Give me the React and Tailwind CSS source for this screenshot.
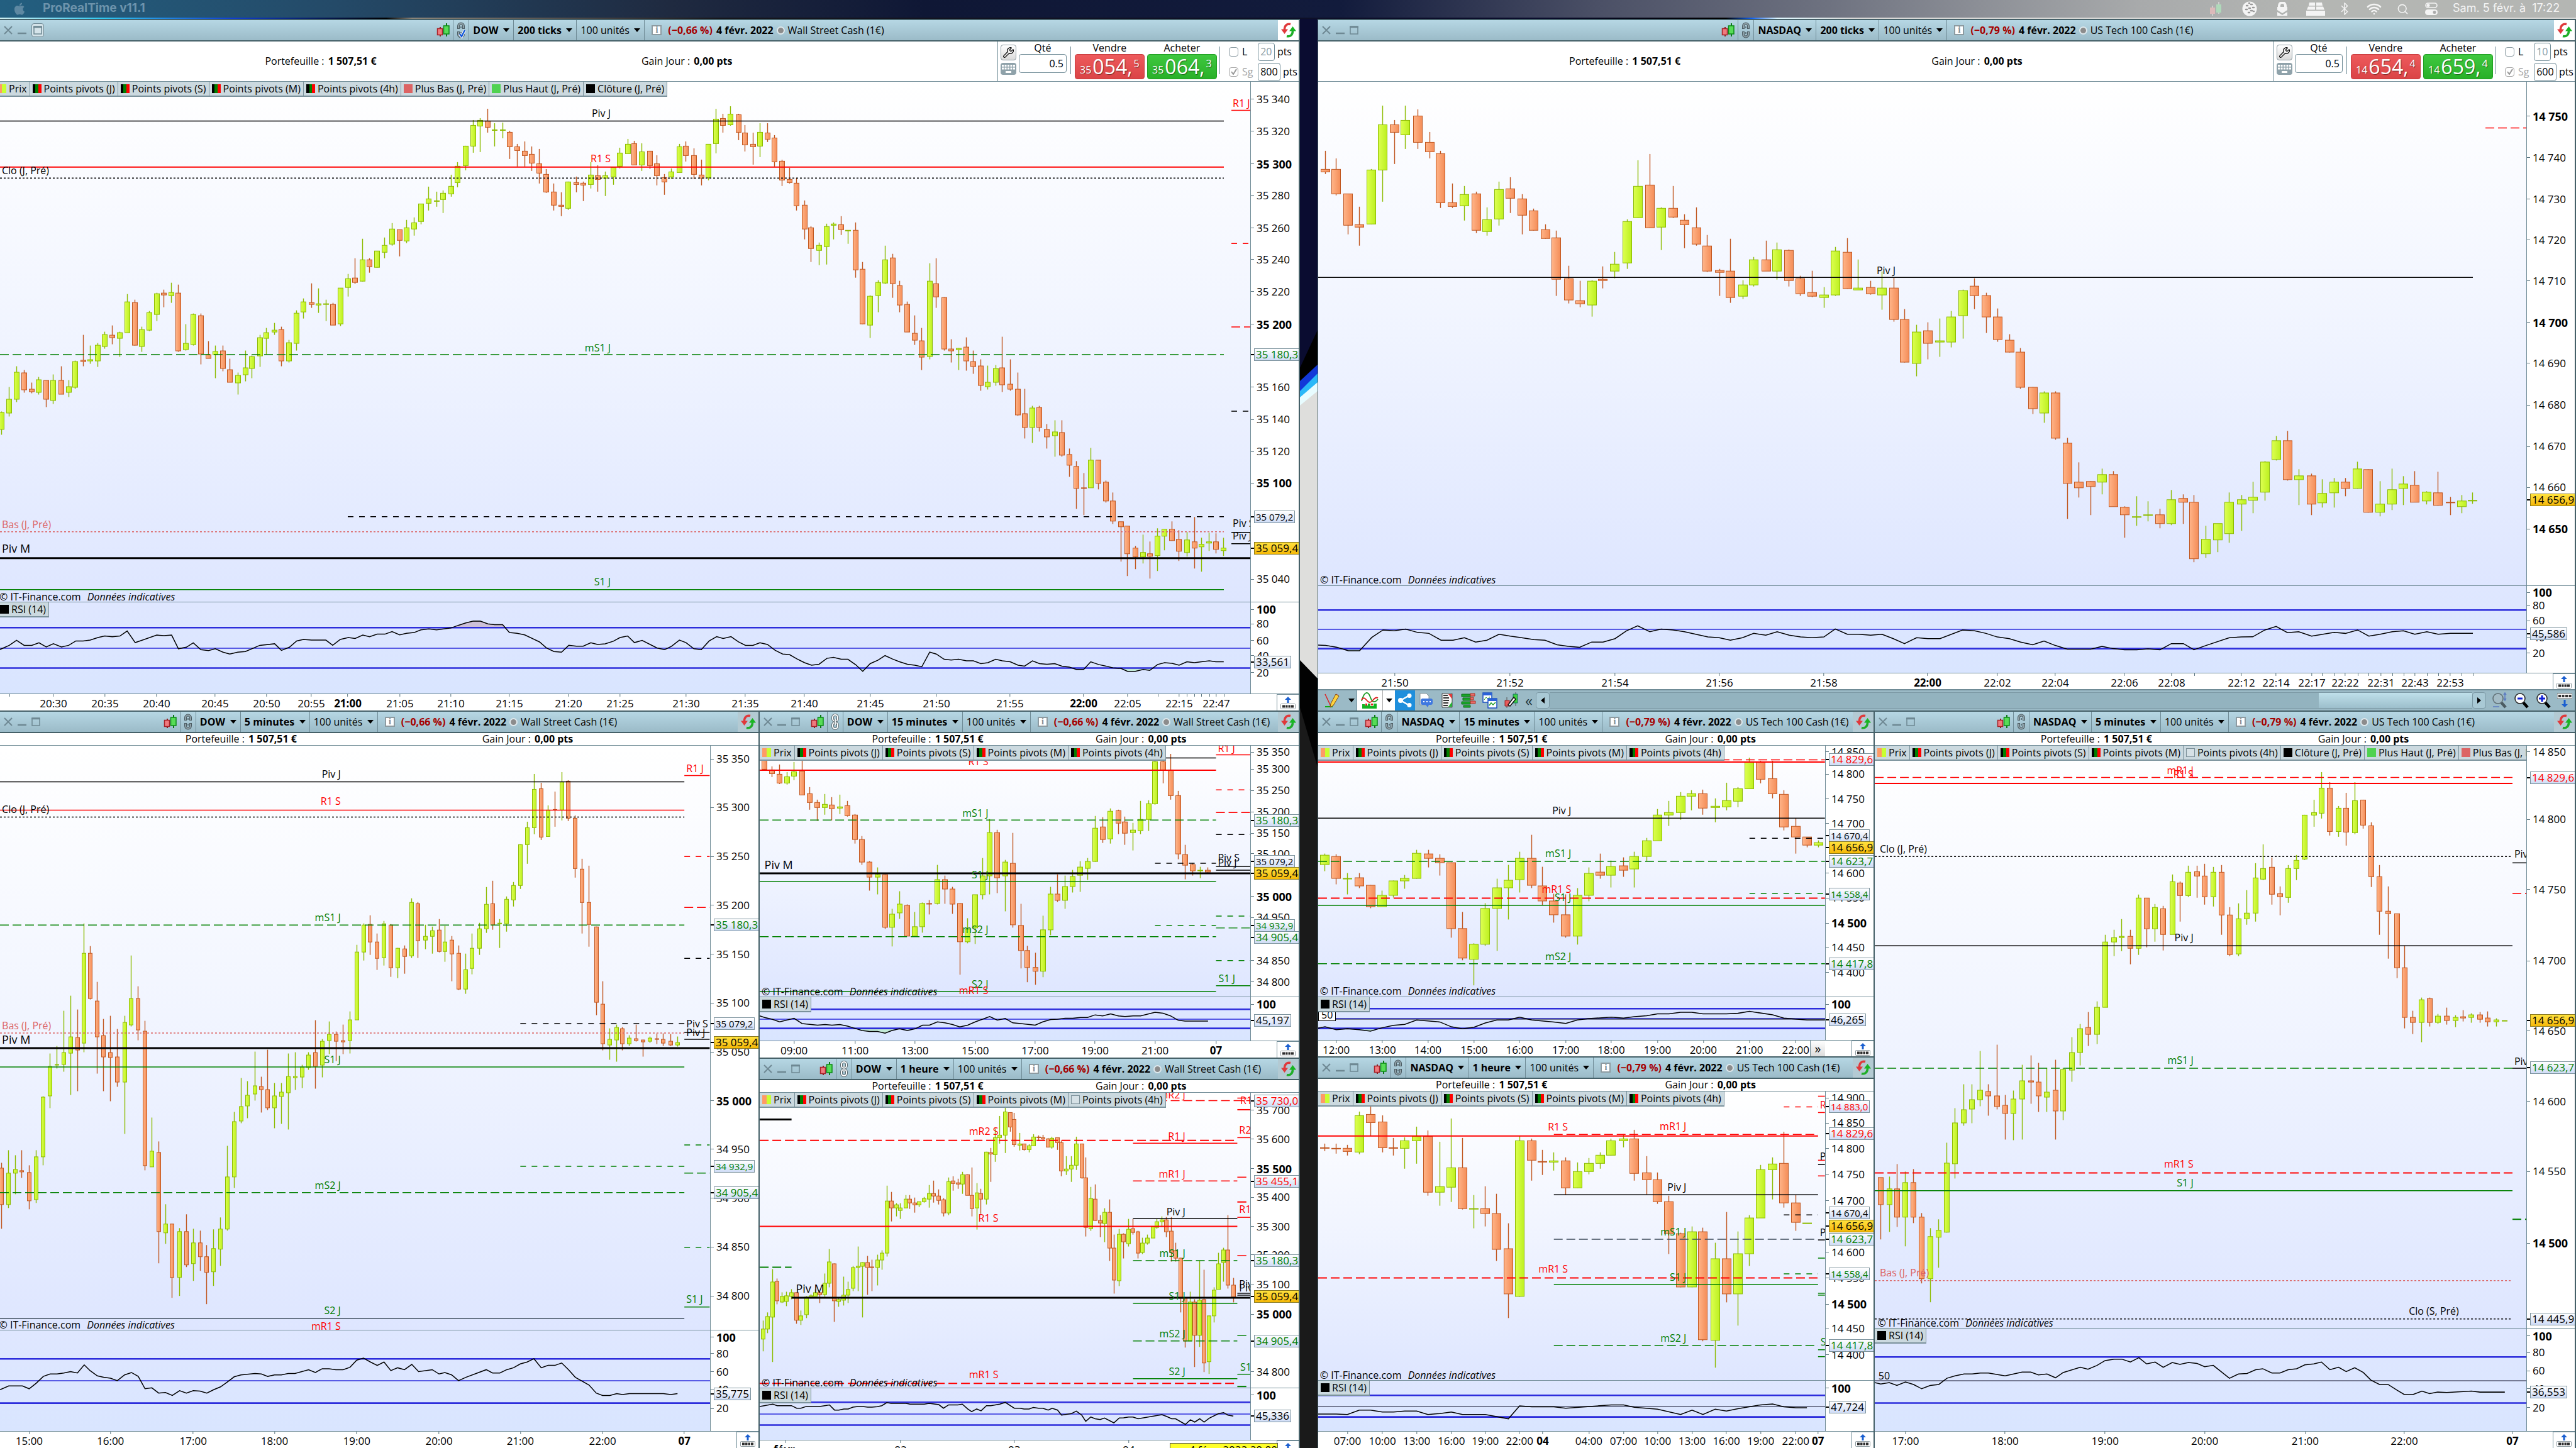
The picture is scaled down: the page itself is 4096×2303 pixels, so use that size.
import React from "react";
import { FaApple } from "react-icons/fa";
import { Bluetooth, Wifi, Search, Wrench } from "lucide-react";

/* ---------- data helpers ---------- */

// Scale of a block of samples: x' = ox + x * sx, y' = oy + y * sy (desktop units).
const scale = (ox, sx, oy, sy) => ({ x: (v) => ox + v * sx, y: (v) => oy + v * sy });
const PX = scale(0, 1, 0, 1);
const A1 = scale(0, 0.6739, 0, 0.36958);
const A2 = scale(1022.6, 0.69567, 0, 0.36958);
const A3 = scale(0, 0.6739, 579.5, 0.36088);
const A4 = scale(1022.6, 0.69567, 579.5, 0.36088);
const B1 = scale(2086.2, 0.6522, 0, 0.36958);
const B2 = scale(3067.9, 0.65567, 0, 0.36958);
const B3 = scale(2086.2, 1.28178, 579.5, 0.36088);
const D5 = scale(0, 0.77394, 1118.1, 0.75568);
const D15 = scale(1186.3, 0.57393, 1118.1, 0.37827);
const D60 = scale(1186.3, 0.57393, 1670.3, 0.40349);
const NQ = scale(2086.2, 0.57393, 1118.1, 0.75568);
const N5 = scale(2972.5, 0.71655, 1118.1, 0.75568);

// "g x high top bottom low, ..." -> candle objects
const candles = (s, text) =>
  text.trim().split(/\s*[,\n]\s*/).map((row) => {
    const p = row.trim().split(/\s+/);
    return { up: p[0] === "g", x: s.x(+p[1]), hi: s.y(+p[2]), top: s.y(+p[3]), bot: s.y(+p[4]), lo: s.y(+p[5]) };
  });

// "x,y x,y ..." -> point pairs
const points = (s, text) =>
  text.trim().split(/\s+/).map((p) => {
    const [x, y] = p.split(",");
    return [s.x(+x), s.y(+y)];
  });

const STROKE = { k: "#000000", r: "#ff0000", g: "#008000", b: "#dc6464", s: "#3c4a5a" };
const INK = { k: "text-black", r: "text-[#ff0000]", g: "text-[#007d00]", b: "text-[#dc6464]" };
const DASH = { L: "14 6", W: "14 6", S: "9 9", O: "3 3" };

// Daily levels are thin, weekly ones medium and monthly ones heavy.
const lineWidth = (w, ink, dash) => {
  if (w === 3) return ink === "k" ? 3 : 2;
  return dash === "W" ? 2 : 1.5;
};

/* ---------- chart data ---------- */

const dowTicks = {
  view: { x: 0, w: 1988, py: 130, ph: 828, rh: 145, th: 27 },
  s: PX,
  body: 8,
  candles: [
    ...candles(A3, `g 4 208 212 288 312,g 22 102 155 216 231,g 39 11 35 156 167,r 57 26 39 114 126,r 75 83 110 122 130,g 91 57 69 126 134,r 109 73 73 156 191,g 126 45 73 160 176,r 144 11 73 133 133,g 162 72 99 126 145,g 178 -15 -11 103 110`),
    ...candles(A1, `r 196 1443 1553 1558 1577,g 213 1487 1550 1554 1566,g 231 1476 1488 1554 1580,g 247 1428 1440 1491 1503,r 265 1402 1443 1455 1484,g 283 1428 1432 1458 1537,g 300 1265 1300 1432 1432,r 318 1291 1303 1488 1488,g 334 1406 1418 1492 1515,g 352 1339 1347 1421 1425,g 370 1262 1266 1355 1382,r 387 1247 1263 1270 1323,g 405 1218 1259 1274 1303,r 421 1225 1263 1510 1515,g 439 1395 1480 1506 1511,g 456 1351 1355 1484 1488,r 474 1350 1359 1525 1569,r 492 1468 1527 1543 1543,g 508 1487 1514 1528 1629,r 526 1487 1510 1587 1600,r 542 1546 1591 1646 1646,g 561 1605 1617 1650 1698,g 579 1509 1584 1613 1643,g 595 1531 1536 1588 1629,g 613 1443 1455 1532 1580,g 629 1413 1432 1458 1526,g 648 1391 1421 1429 1443,r 664 1406 1418 1554 1578,g 682 1465 1477 1554 1562,g 700 1336 1348 1480 1510,g 716 1284 1300 1344 1373,r 735 1221 1303 1311 1326,g 751 1243 1307 1314 1348,g 769 1291 1307 1311 1382,r 785 1303 1311 1399 1399,g 803 1241 1241 1395 1404,g 822 1181 1200 1237 1278,r 838 1111 1196 1215 1223,g 856 1029 1119 1211 1211,r 872 1111 1119 1148 1175,g 890 1082 1082 1152 1152,g 908 1022 1056 1086 1112,g 925 960 986 1052 1057,r 943 990 990 1034 1105,g 959 948 982 1038 1046,g 977 937 960 986 1016,g 993 879 879 953 965,g 1012 804 857 875 906,g 1030 826 864 866 889,g 1046 820 831 860 917,g 1064 752 801 835 847,g 1080 697 717 787 806,g 1099 628 628 713 732,g 1117 517 539 628 658,g 1133 509 518 543 655,r 1151 469 521 547 570,g 1167 531 558 560 631,g 1186 528 558 562 596,r 1202 564 569 632 684,r 1220 620 632 647 718,r 1238 609 650 669 717,r 1254 631 665 702 736,r 1273 642 706 746 791,r 1289 728 750 827 832,r 1307 791 827 883 906,r 1325 829 883 890 932,g 1341 783 783 897 905,r 1360 760 787 794 828,r 1376 783 790 798 865,g 1394 697 754 794 813,r 1410 712 757 772 825,g 1428 738 757 767 843,g 1447 722 722 761 795,g 1463 635 658 717 725,g 1481 598 621 661 661,r 1497 605 617 709 709,g 1515 616 654 709 735,r 1534 650 650 713 728,r 1550 669 706 757 799`),
    ...candles(A2, `r 49 750 765 783 839,g 65 724 739 761 772,g 83 620 632 742 742,r 98 609 628 669 695,r 116 638 669 750 772,r 133 686 753 768 799,g 149 621 621 765 776,g 167 469 514 617 659,r 182 491 510 540 570,g 200 457 492 536 540,r 218 491 495 569 603,r 233 539 573 625 651,r 251 572 621 632 710,g 267 531 569 628 677,r 284 531 573 599 611,r 300 583 595 698 718,r 318 686 694 776 802,r 335 722 772 787 791,r 351 765 790 886 906,r 369 863 883 986 1031,r 384 974 982 1071 1127,g 402 1045 1056 1078 1142,g 420 963 975 1063 1138,g 435 959 964 971 1031,r 453 930 967 990 1012,g 468 992 993 995 1050,r 486 959 993 1163 1197,r 502 1129 1159 1396 1396,g 519 1273 1277 1399 1455,g 537 1206 1215 1274 1345,g 553 1059 1119 1219 1223,r 570 1092 1111 1222 1282,r 586 1210 1230 1314 1345,r 604 1299 1311 1429 1429,r 621 1358 1436 1466 1485,r 637 1413 1469 1539 1595,g 655 1133 1211 1536 1547,r 670 1111 1222 1278 1326,r 688 1281 1281 1502 1510,r 704 1461 1502 1510 1561,g 721 1499 1499 1506 1593,r 739 1454 1495 1554 1596,r 755 1509 1558 1580 1609`),
    ...candles(A4, `r 772 -20 8 95 118,g 788 8 80 100 111,g 806 4 20 80 96,r 821 -120 16 92 122,r 839 -20 88 110 119,r 857 38 110 224 229,r 872 110 220 280 327,g 890 185 194 280 349,r 906 185 190 280 297,r 923 264 288 322 372,g 941 249 299 315 410,r 957 249 303 402 409,r 974 374 398 446 497,r 990 427 451 549 640,r 1007 480 545 549 667,g 1023 370 424 545 545,r 1041 424 424 526 554,r 1058 514 522 605 610,r 1074 567 605 692 705,r 1092 696 696 719 871,r 1107 715 715 836 935,r 1125 801 812 850 905,g 1143 752 832 850 881,r 1158 782 836 847 946,g 1176 725 760 844 912,g 1192 730 730 760 822,r 1209 695 730 779 779,r 1225 733 772 825 870,g 1243 740 776 832 850,r 1260 676 783 813 901,g 1276 767 794 806 916,g 1294 744 783 791 825,r 1309 748 783 817 836,g 1327 767 813 822 847`),
  ],
  lines: [
    [192, 0, 1946, "k", 2], [266, 0, 1946, "r", 3], [283, 0, 1946, "k", 1, "O"], [564, 0, 1946, "g", 1, "L"],
    [822, 553, 1946, "k", 1, "S"], [846, 0, 1946, "b", 1, "O"], [888, 0, 1988, "k", 3], [938, 0, 1946, "g", 2],
    [175, 1958, 1988, "r", 2], [387, 1958, 1988, "r", 1, "S"], [520, 1958, 1988, "r", 1, "L"], [654, 1958, 1988, "k", 1, "S"],
    [847, 1958, 1988, "k", 2], [865, 1958, 1988, "k", 2],
  ],
  labels: [
    ["Piv J", 971, 180, "k", "r"], ["R1 S", 971, 252, "r", "r"], ["Clo (J, Pré)", 3, 271, "k"], ["mS1 J", 971, 553, "g", "r"],
    ["Bas (J, Pré)", 3, 835, "b"], ["Piv M", 3, 873, "k", "l", 1], ["S1 J", 971, 926, "g", "r"],
    ["R1 J", 1960, 164, "r"], ["Piv S", 1960, 833, "k"], ["Piv J", 1960, 853, "k"],
  ],
  copyright: [-1, 950],
  axis: [["35 340", 158], ["35 320", 209], ["35 300", 261, 1], ["35 280", 311], ["35 260", 363], ["35 240", 413], ["35 220", 464], ["35 200", 516, 1], ["35 160", 616], ["35 140", 668], ["35 120", 719], ["35 100", 769, 1], ["35 040", 922]],
  boxes: [["35 180,3", 564, "g"], ["35 079,2", 823, "k", 1], ["35 059,4", 873, "y"]],
  rsi: [
    ...points(A3, `0,1258 22,1240 39,1218 57,1240 75,1240 92,1229 109,1247 126,1233 145,1247 162,1240 179,1221 196,1221 213,1217 231,1206 247,1199 265,1202 283,1199 300,1177 319,1228 370,1195 387,1198 405,1195 421,1255 440,1248 456,1229 474,1259 492,1263 508,1255 526,1270 542,1278 561,1270 579,1267 613,1240 648,1233 664,1262 683,1248 700,1221 716,1214 735,1217 769,1217 785,1240 803,1214 822,1206 838,1210 856,1195 872,1202 890,1191 908,1191 925,1180 943,1194 959,1187 977,1184 993,1172 1012,1168 1030,1172 1064,1164 1082,1152 1099,1142 1117,1134 1133,1134 1151,1146 1167,1149 1186,1149 1202,1184 1220,1187 1238,1194 1273,1225 1289,1251 1307,1267 1325,1270 1342,1240 1360,1244 1376,1244 1394,1229 1410,1236 1428,1233 1447,1222 1463,1206 1481,1199 1497,1228 1515,1218 1550,1251`),
    ...points(A4, `49,1259 65,1244 83,1217 98,1228 116,1255 133,1259 151,1221 168,1202 183,1210 201,1202 218,1225 234,1240 251,1240 267,1229 284,1236 302,1262 319,1278 335,1281 352,1300 369,1316 385,1327 402,1323 420,1297 435,1293 453,1301 468,1301 486,1325 502,1354 519,1320 537,1305 553,1285 570,1300 586,1312 604,1323 621,1327 637,1334 655,1270 670,1278 688,1301 704,1304 721,1301 739,1308 755,1308 772,1320 788,1316 806,1301 821,1308 839,1312 857,1327 872,1331 890,1308 906,1320 923,1323 941,1320 957,1331 974,1335 990,1346 1007,1346 1023,1312 1041,1324 1058,1331 1074,1339 1092,1341 1107,1354 1125,1354 1143,1346 1158,1350 1176,1324 1192,1316 1209,1319 1225,1327 1243,1312 1260,1316 1276,1312 1294,1308 1309,1312 1327,1312`),
  ],
  bands: [999, 1031, 1063],
  rsiAxis: [["100", 970, 1], ["80", 993], ["60", 1019], ["40", 1043], ["20", 1070]],
  rsiBox: ["33,561", 1053],
  times: [["20:30", 85], ["20:35", 167], ["20:40", 249], ["20:45", 342], ["20:50", 424], ["20:55", 495], ["21:00", 553, 1], ["21:05", 636], ["21:10", 717], ["21:15", 810], ["21:20", 904], ["21:25", 986], ["21:30", 1091], ["21:35", 1185], ["21:40", 1279], ["21:45", 1384], ["21:50", 1489], ["21:55", 1606], ["22:00", 1723, 1], ["22:05", 1793], ["22:15", 1875], ["22:47", 1934]],
  extraTicks: [15, 1841, 1887, 1899, 1910, 1923, 1946],
};

const nasTicks = {
  view: { x: 2096, w: 1921, py: 130, ph: 802, rh: 138, th: 26 },
  s: PX,
  body: 14,
  candles: [
    ...candles(B1, `r 32 649 728 739 750,r 59 683 728 835 842,r 88 835 835 971 1008,r 115 889 967 979 1057,g 145 727 732 964 967,g 172 454 536 732 869,r 201 517 536 569 707,g 228 454 518 580 640,r 258 472 499 613 640,r 287 568 613 654 681,r 314 649 661 872 895,r 343 790 872 890 895,g 371 801 838 886 949,r 400 826 835 993 1004,g 427 893 945 997 1016,g 456 782 816 942 972,r 483 764 813 853 917,r 512 837 857 927 1008,r 540 897 908 993 993,r 569 967 990 1027 1027,r 596 992 1023 1204 1275,r 626 1144 1200 1292 1308,r 653 1210 1296 1307 1323,g 682 1206 1211 1314 1363,r 709 1147 1204 1207 1241,g 738 1085 1137 1167 1200,g 768 944 953 1133 1157,g 795 690 802 938 938,r 824 664 798 982 982,g 851 893 898 979 1076,r 881 801 898 934 938,r 908 922 949 967 1068,r 937 893 982 1052 1057,r 964 1011 1060 1167 1171,r 994 1158 1166 1174 1274,r 1020 1029 1167 1281 1304,g 1050 1206 1226 1277 1288,g 1077 1107 1119 1226 1234,r 1107 1037 1119 1167 1167,g 1134 1044 1075 1167 1205,r 1163 1074 1078 1207 1234,r 1190 1188 1200 1266 1275,r 1219 1165 1259 1277 1281,g 1249 1236 1270 1281 1326,g 1276 1063 1082 1270 1275,r 1305 1026 1086 1244 1244,g 1332 1118 1241 1248 1248,r 1362 1210 1237 1266 1270,g 1389 1170 1241 1270 1334,r 1418 1196 1241 1377 1385,r 1445 1332 1377 1561 1561,g 1474 1398 1429 1565 1621,r 1502 1387 1425 1480 1548,g 1531 1372 1469 1473 1536,g 1558 1339 1366 1473 1496`),
    ...candles(B2, `g 82 1247 1252 1359 1459,r 109 1199 1233 1274 1330,r 138 1262 1274 1366 1433,r 165 1328 1366 1462 1473,r 194 1439 1466 1517 1517,r 221 1498 1517 1668 1676`),
    ...candles(B3, `r 894 102 102 197 221,g 908 121 128 216 259,r 922 121 128 326 333,r 937 325 348 526 682,r 951 435 522 545 590,r 966 518 518 541 667,g 980 461 488 522 576,r 994 472 488 628 628,r 1008 627 632 666 765,g 1023 582 673 675 714,g 1037 605 666 668 695,r 1052 640 666 704 724,g 1066 555 598 704 711,r 1081 574 594 609 704,r 1094 578 609 859 875,g 1109 714 772 836 855,g 1124 704 704 775 829,g 1138 567 609 749 787,g 1153 578 598 617 735,g 1167 520 587 602 658,g 1182 427 432 564 602,g 1196 317 337 420 424,r 1210 295 337 511 515,g 1224 465 492 511 622,r 1240 484 492 617 667,g 1253 509 572 613 632,g 1268 503 522 568 632,r 1282 503 522 549 583,g 1297 431 462 549 549,r 1310 465 466 655 655,g 1325 517 617 655 673,g 1340 461 553 617 643,g 1354 495 530 549 622,r 1368 472 534 609 609,g 1383 560 564 605 618,r 1397 476 568 624 624,r 1412 586 609 613 667,g 1426 578 605 628 658,g 1440 567 602 605 617`),
  ],
  lines: [[441, 2096, 3932, "k", 1], [203, 3952, 4017, "r", 2, "L"]],
  labels: [["Piv J", 3014, 430, "k", "r"]],
  copyright: [2099, 923],
  axis: [["14 750", 185, 1], ["14 740", 251], ["14 730", 317], ["14 720", 382], ["14 710", 447], ["14 700", 513, 1], ["14 690", 578], ["14 680", 645], ["14 670", 711], ["14 660", 776], ["14 650", 842, 1]],
  boxes: [["14 656,9", 796, "y"]],
  rsi: points(B3, `7,1238 17,1240 31,1248 45,1263 59,1263 74,1205 88,1172 102,1176 116,1168 131,1183 145,1187 160,1217 175,1217 189,1206 203,1225 217,1217 232,1191 246,1199 260,1206 275,1214 289,1217 304,1237 318,1244 332,1248 347,1225 361,1225 376,1210 390,1176 404,1154 419,1180 433,1168 448,1172 462,1180 476,1191 491,1203 505,1206 519,1217 534,1206 548,1187 563,1195 577,1180 592,1195 606,1203 620,1206 635,1203 649,1168 664,1191 678,1191 693,1195 707,1191 721,1210 735,1232 750,1206 764,1210 779,1210 807,1172 822,1176 836,1187 850,1203 865,1210 879,1225 894,1237 908,1221 922,1240 937,1256 966,1256 980,1244 994,1254 1008,1259 1023,1259 1037,1255 1052,1259 1066,1232 1081,1232 1094,1259 1109,1240 1138,1206 1153,1203 1167,1202 1182,1172 1196,1157 1210,1184 1224,1180 1240,1199 1268,1183 1282,1187 1297,1172 1311,1199 1325,1191 1340,1180 1354,1176 1368,1191 1383,1180 1397,1191 1412,1187 1440,1187`),
  bands: [971, 1001, 1032],
  rsiAxis: [["100", 943, 1], ["80", 964], ["60", 988], ["40", 1014], ["20", 1039]],
  rsiBox: ["45,586", 1008],
  times: [["21:50", 2218], ["21:52", 2401], ["21:54", 2568], ["21:56", 2734], ["21:58", 2900], ["22:00", 3065, 1], ["22:02", 3176], ["22:04", 3268], ["22:06", 3378], ["22:08", 3453], ["22:12", 3564], ["22:14", 3619], ["22:17", 3676], ["22:22", 3729], ["22:31", 3786], ["22:43", 3840], ["22:53", 3896]],
  extraTicks: [3489, 3692, 3711, 3749, 3766, 3804, 3822, 3859, 3877, 3914, 3932],
};

const dow5 = {
  view: { x: 0, w: 1129, py: 1186, ph: 930, rh: 160, th: 27 },
  s: D5,
  body: 6,
  candles: candles(D5, `r 3 969 980 1056 1107,g 18 942 991 1056 1064,g 32 952 983 991 1035,r 45 942 985 988 1000,r 60 974 989 1048 1067,g 74 942 956 1046 1053,g 88 828 830 956 974,g 103 738 766 828 853,g 117 722 761 763 770,g 131 648 736 761 776,g 145 617 703 738 825,r 159 646 704 731 818,g 173 464 527 716 736,r 185 512 527 623 625,r 200 587 628 703 780,r 213 666 700 745 818,r 227 659 736 747 839,r 241 687 745 798 809,g 256 659 673 798 907,g 270 532 623 678 682,r 284 597 623 689 711,r 298 670 691 974 984,g 312 873 944 977 977,r 326 924 947 1113 1180,g 340 1056 1097 1116 1139,r 354 1097 1097 1210 1253,g 369 1106 1113 1210 1249,r 383 1077 1113 1183 1188,g 397 1108 1137 1181 1217,r 411 1111 1137 1167 1196,r 425 1142 1167 1199 1266,g 439 1109 1149 1198 1228,g 453 1083 1108 1150 1186,g 467 933 998 1108 1111,g 481 862 882 998 1021,g 495 790 850 881 885,g 509 796 826 849 875,g 524 734 807 823 837,r 537 787 808 815 863,r 550 730 814 853 858,g 564 801 828 853 896,g 578 801 819 829 887,g 592 738 787 821 898,g 606 736 787 789 815,g 621 762 767 788 811,g 634 736 741 768 773,r 648 668 736 766 813,g 662 708 713 763 789,g 676 671 698 711 739,r 690 692 698 713 754,r 705 678 711 714 740,g 719 650 667 711 738,g 733 509 525 667 667,g 747 464 467 525 543,r 761 447 466 503 531,r 775 486 503 538 562,g 789 459 465 536 553,r 803 466 467 557 577,g 817 516 516 558 580,r 831 511 518 534 570,g 846 411 420 532 537,r 859 420 423 501 537,g 874 467 491 500 518,g 888 471 480 491 528,r 902 455 478 523 525,g 914 469 503 523 545,r 928 491 500 528 586,r 942 511 527 603 605,g 957 528 561 603 612,g 970 486 516 559 572,g 985 463 475 516 531,g 999 388 424 475 484,r 1012 374 423 467 478,g 1027 455 464 465 516,g 1041 408 413 465 482,g 1055 377 384 415 428,g 1069 298 298 384 392,g 1083 250 263 298 339,g 1097 150 182 263 276,r 1112 168 180 282 288,g 1126 215 225 281 282,r 1140 187 224 226 260,g 1154 146 166 225 247,r 1168 162 164 243 248,r 1182 237 243 348 368,r 1196 328 350 420 486,r 1210 342 420 466 513,r 1225 471 471 631 657,r 1238 586 635 718 731,g 1253 686 709 720 752,g 1267 678 684 710 755,r 1279 683 686 718 732,g 1293 700 706 718 723,r 1307 678 707 711 713,r 1321 709 710 714 745,g 1335 703 706 713 716,r 1349 696 707 708 719,r 1363 696 708 716 722,r 1378 697 712 720 722,g 1392 702 715 721 724`),
  lines: [
    [166, 0, 1406, "k", 2], [226, 0, 1406, "r", 2], [240, 0, 1406, "k", 1, "O"], [467, 0, 1406, "g", 1, "L"], [675, 1069, 1406, "k", 1, "S"],
    [695, 0, 1406, "b", 1, "O"], [727, 0, 1458, "k", 3], [767, 0, 1406, "g", 2], [1032, 0, 1406, "g", 2, "L"], [976, 1069, 1406, "g", 1, "S"],
    [1296, 0, 1406, "s", 1], [153, 1406, 1458, "r", 2], [323, 1406, 1458, "r", 1, "S"], [431, 1406, 1458, "r", 1, "L"], [538, 1406, 1458, "k", 1, "S"],
    [694, 1406, 1458, "k", 2], [709, 1406, 1458, "k", 2], [931, 1406, 1458, "g", 1, "S"], [991, 1406, 1458, "g", 1, "L"], [1146, 1406, 1458, "g", 1, "S"], [1272, 1406, 1458, "g", 2],
  ],
  labels: [
    ["Piv J", 700, 150, "k", "r"], ["R1 S", 700, 207, "r", "r"], ["Clo (J, Pré)", 4, 224, "k"], ["mS1 J", 700, 451, "g", "r"], ["Bas (J, Pré)", 4, 679, "b"],
    ["Piv M", 4, 709, "k", "l", 1], ["S1 J", 700, 751, "g", "r"], ["mS2 J", 700, 1016, "g", "r"], ["S2 J", 700, 1279, "g", "r"], ["mR1 S", 700, 1312, "r", "r"],
    ["R1 J", 1410, 138, "r"], ["Piv S", 1410, 675, "k"], ["Piv J", 1410, 694, "k"], ["S1 J", 1410, 1256, "g"],
  ],
  copyright: [-2, 1310],
  axis: [["35 350", 118], ["35 300", 220], ["35 250", 323], ["35 200", 426], ["35 150", 529], ["35 100", 632], ["35 050", 735], ["35 000", 838, 1], ["34 950", 940], ["34 900", 1043], ["34 850", 1146], ["34 800", 1249]],
  boxes: [["35 180,3", 467, "g"], ["35 079,2", 675, "k", 1], ["35 059,4", 715, "y"], ["34 932,9", 976, "g", 1], ["34 905,4", 1032, "g"]],
  rsi: points(D5, `0,1446 18,1438 46,1438 60,1444 75,1432 89,1418 103,1413 117,1413 131,1411 145,1408 159,1411 173,1394 185,1406 200,1417 213,1420 227,1422 241,1427 256,1415 270,1410 284,1418 298,1444 312,1442 326,1453 340,1452 354,1458 369,1448 383,1453 397,1448 411,1449 425,1453 439,1446 453,1440 467,1430 481,1419 495,1415 524,1412 537,1413 550,1418 564,1415 578,1415 592,1412 606,1412 634,1404 648,1410 662,1402 676,1402 690,1404 705,1404 719,1399 733,1384 747,1380 761,1388 775,1395 789,1388 803,1406 817,1400 831,1404 846,1393 860,1408 888,1404 902,1413 914,1410 928,1415 942,1427 957,1420 999,1404 1012,1411 1027,1411 1041,1404 1055,1400 1069,1392 1083,1388 1097,1381 1112,1400 1126,1395 1140,1395 1154,1390 1168,1404 1182,1420 1210,1436 1225,1453 1238,1458 1253,1458 1267,1454 1279,1456 1293,1454 1363,1454 1378,1456 1392,1454`),
  bands: [1381, 1427, 1474],
  rsiAxis: [["100", 1336, 1], ["80", 1370], ["60", 1408], ["40", 1446], ["20", 1485]],
  rsiBox: ["35,775", 1454],
  times: [["15:00", 60], ["16:00", 227], ["17:00", 397], ["18:00", 564], ["19:00", 733], ["20:00", 902], ["21:00", 1069], ["22:00", 1238], ["07", 1406, 1]],
};

const dow15 = {
  view: { x: 1208, w: 780, py: 1186, ph: 400, rh: 69, th: 27 },
  s: D15,
  body: 8,
  candles: candles(D15, `r 51 230 235 279 279,r 72 267 280 297 311,r 93 260 300 336 341,g 114 291 311 336 344,g 133 249 289 307 326,r 155 242 286 387 387,r 176 353 382 419 449,r 198 407 419 441 498,g 219 382 426 441 470,r 238 397 430 444 493,g 260 386 437 443 467,r 281 411 433 473 478,r 302 468 472 574 593,r 321 560 574 671 683,r 342 667 671 733 791,g 364 692 722 733 806,r 385 722 722 945 952,g 404 866 888 945 1026,g 425 793 848 884 908,r 447 848 852 981 981,g 468 880 942 981 983,g 489 840 844 942 967,r 508 829 844 846 890,g 530 681 743 844 849,r 551 728 743 783 845,r 572 775 783 848 889,r 592 844 844 1006 1144,g 614 907 952 1006 1012,g 635 808 808 948 1016,g 656 652 729 808 826,g 675 490 545 729 806,r 696 533 545 736 801,g 718 660 671 729 878,r 739 548 675 935 946,r 761 847 938 1043 1117,r 780 1024 1043 1115 1177,r 801 1053 1115 1129 1188,g 822 897 956 1129 1155,g 844 775 805 956 978,r 863 721 805 830 838,g 884 728 772 830 867,g 905 703 732 772 797,g 926 666 692 725 795,g 946 652 668 696 744,g 967 476 527 668 668,r 988 482 523 574 589,g 1010 443 455 571 593,r 1031 450 454 505 553,r 1050 479 502 549 597,g 1072 504 534 545 622,g 1093 411 491 538 553,g 1115 410 423 491 538,g 1133 230 246 423 427,r 1155 240 246 282 337,r 1176 213 282 390 408,r 1197 370 390 635 657,r 1216 597 639 682 743,r 1238 675 681 708 726,g 1259 691 703 708 737,r 1280 692 703 711 718`),
  lines: [
    [230, 38, 1302, "k", 1], [282, 38, 1302, "r", 3], [494, 38, 1302, "g", 2, "L"], [717, 38, 1397, "k", 3], [753, 38, 1302, "g", 1], [674, 1133, 1302, "k", 2, "S"],
    [937, 1133, 1302, "g", 1, "S"], [984, 38, 1302, "g", 2, "L"], [1215, 38, 1302, "g", 2], [219, 1302, 1397, "r", 2], [367, 1302, 1397, "r", 1, "S"],
    [461, 1302, 1397, "r", 1, "L"], [554, 1302, 1397, "k", 1, "S"], [689, 1302, 1397, "k", 2], [703, 1302, 1397, "k", 2], [897, 1302, 1397, "g", 1, "S"],
    [947, 1302, 1397, "g", 2, "L"], [1084, 1302, 1397, "g", 2, "S"], [1192, 1302, 1397, "g", 2],
  ],
  labels: [
    ["R1 S", 671, 247, "r", "r"], ["mS1 J", 671, 462, "g", "r"], ["Piv M", 51, 679, "k", "l", 1], ["S1 J", 671, 722, "g", "r"], ["mS2 J", 671, 953, "g", "r"],
    ["S2 J", 671, 1183, "g", "r"], ["mR1 S", 671, 1211, "r", "r"], ["R1 J", 1307, 191, "r"], ["Piv S", 1307, 652, "k"], ["Piv J", 1307, 673, "k"], ["S1 J", 1309, 1161, "g"],
  ],
  copyright: [43, 1215],
  axis: [["35 350", 207], ["35 300", 278], ["35 250", 368], ["35 200", 458], ["35 150", 548], ["35 100", 635], ["35 000", 815, 1], ["34 950", 903], ["34 850", 1085], ["34 800", 1175]],
  boxes: [["35 180,3", 494, "g"], ["35 079,2", 667, "k", 1], ["35 059,4", 717, "y"], ["34 932,9", 936, "g", 1], ["34 905,4", 988, "g"]],
  rsi: points(D15, `38,1317 51,1324 72,1331 93,1342 133,1327 155,1349 198,1356 219,1353 238,1356 260,1353 281,1360 302,1369 321,1378 342,1382 364,1382 385,1389 404,1378 425,1371 447,1378 468,1371 489,1356 508,1356 530,1342 551,1346 572,1353 592,1363 614,1356 635,1342 675,1320 696,1335 718,1328 739,1346 761,1349 801,1356 822,1342 844,1332 863,1331 884,1327 905,1327 926,1324 946,1324 967,1313 988,1317 1010,1309 1031,1317 1050,1320 1072,1317 1093,1317 1133,1302 1155,1306 1176,1317 1197,1335 1216,1339 1280,1339`),
  bands: [1291, 1330, 1370],
  rsiAxis: [["100", 1268, 1]],
  rsiBox: ["45,197", 1336],
  times: [["09:00", 133], ["11:00", 302], ["13:00", 468], ["15:00", 635], ["17:00", 801], ["19:00", 967], ["21:00", 1133], ["07", 1302, 1]],
};

const dow60 = {
  view: { x: 1208, w: 780, py: 1738, ph: 470, rh: 82, th: 13 },
  s: D60,
  body: 6,
  candles: candles(D60, `g 48 1067 1102 1140 1190,g 60 1034 1052 1102 1116,g 74 865 916 1055 1231,r 86 902 912 990 1004,g 99 957 971 994 999,g 112 954 970 991 1011,g 126 944 957 971 982,r 140 957 957 1065 1079,g 152 1027 1048 1065 1085,g 167 971 975 1045 1057,g 179 964 970 974 978,g 192 944 957 971 971,r 204 954 957 964 998,g 219 882 920 964 974,g 231 784 835 920 936,r 245 842 842 990 1073,g 257 976 984 991 1012,g 271 893 966 988 1008,g 283 913 944 968 998,g 296 851 858 940 951,g 310 774 852 858 951,g 323 837 838 852 1056,r 337 811 839 857 967,r 349 828 856 858 950,g 364 808 828 858 928,g 376 791 802 828 867,g 390 534 595 802 815,r 402 559 595 622 677,g 416 604 609 622 656,g 428 604 622 633 667,g 443 571 589 622 622,r 454 571 589 602 627,r 467 582 602 609 640,g 480 599 599 611 620,g 494 580 585 599 602,g 507 532 565 589 621,r 520 514 565 575 602,r 534 550 575 592 609,r 547 585 591 643 656,g 561 503 518 643 650,r 573 497 517 525 555,r 587 508 523 528 548,g 599 480 491 528 567,r 614 491 491 572 572,r 625 463 572 626 656,g 639 524 562 622 708,r 651 548 565 589 645,g 666 401 403 589 609,r 678 387 405 409 519,g 691 309 346 412 441,g 703 260 335 346 368,g 718 226 244 336 405,r 733 244 247 304 322,r 743 247 274 373 380,g 759 326 371 374 397,r 770 370 371 393 397,g 784 370 376 393 404,g 796 331 342 376 378,r 810 337 342 346 358,r 822 335 345 351 357,r 837 346 350 383 383,g 848 342 347 383 388,r 863 346 346 366 394,r 874 357 366 477 497,g 888 419 470 477 492,g 901 418 454 470 519,g 915 342 369 455 472,r 930 369 369 504 508,r 941 422 504 699 735,g 955 540 585 704 714,r 967 530 588 673 673,r 981 652 673 683 738,g 993 625 639 684 758,r 1008 589 639 782 833,r 1019 728 782 907 962,g 1034 706 727 910 932,r 1046 723 727 757 822,g 1060 665 706 764 776,r 1072 665 704 720 727,r 1086 712 716 802 822,g 1098 740 761 799 804,g 1112 729 741 761 768,g 1127 698 698 741 741,g 1138 665 677 700 705,g 1152 656 670 677 697,r 1165 659 670 717 738,r 1179 658 714 798 835,r 1190 761 792 822 834,r 1205 819 822 980 1035,r 1217 978 978 1147 1175,g 1231 954 994 1147 1147,r 1243 984 994 1126 1251,g 1257 833 988 1126 1171,r 1269 867 984 1235 1271,g 1283 1048 1048 1231 1278,g 1296 936 947 1048 1075,g 1309 801 842 944 944,g 1323 781 788 839 913,r 1335 652 788 928 940,r 1350 898 927 975 995`),
  lines: [
    [273, 38, 126, "k", 3], [858, 38, 126, "g", 3, "W"], [355, 38, 1361, "r", 2, "W"], [696, 38, 1361, "r", 3], [976, 126, 1397, "k", 3], [1315, 38, 1361, "r", 2, "W"],
    [199, 1072, 1397, "r", 1, "L"], [368, 1072, 1361, "r", 2], [517, 1072, 1361, "r", 1, "L"], [665, 1072, 1361, "k", 1], [831, 1072, 1361, "g", 1, "L"],
    [1000, 1072, 1361, "g", 1], [1149, 1072, 1361, "g", 2, "L"], [1297, 1072, 1361, "g", 2],
    [188, 1361, 1386, "r", 1], [234, 1361, 1397, "r", 3], [345, 1361, 1397, "r", 1], [500, 1361, 1386, "r", 2], [598, 1361, 1386, "r", 3], [659, 1361, 1397, "r", 2],
    [811, 1361, 1386, "r", 1], [959, 1361, 1397, "k", 2], [966, 1361, 1397, "k", 1], [1125, 1361, 1386, "g", 1], [1280, 1361, 1397, "g", 2], [1327, 1361, 1386, "g", 3],
  ],
  labels: [
    ["mR2 S", 699, 320, "r", "r"], ["R1 S", 699, 661, "r", "r"], ["Piv M", 138, 940, "k", "l", 1], ["mR1 S", 699, 1280, "r", "r"], ["mR2 J", 1217, 175, "r", "r"],
    ["R1 J", 1217, 338, "r", "r"], ["mR1 J", 1217, 487, "r", "r"], ["Piv J", 1217, 636, "k", "r"], ["mS1 J", 1217, 801, "g", "r"], ["S1 J", 1217, 969, "g", "r"],
    ["mS2 J", 1217, 1119, "g", "r"], ["S2 J", 1217, 1268, "g", "r"], ["R1 M", 1369, 198, "r"], ["R2 J", 1366, 315, "r"], ["R1 J", 1366, 628, "r"],
    ["Piv S", 1366, 923, "k"], ["Piv J", 1366, 937, "k"], ["S1 J", 1369, 1250, "g"],
  ],
  copyright: [43, 1312],
  axis: [["35 700", 237], ["35 600", 351], ["35 500", 467, 1], ["35 400", 581], ["35 300", 696], ["35 200", 808], ["35 100", 926], ["35 000", 1042, 1], ["34 800", 1270]],
  boxes: [["35 730,0", 199, "r"], ["35 455,1", 517, "r"], ["35 180,3", 831, "g"], ["35 059,4", 973, "y"], ["34 905,4", 1148, "g"]],
  rsi: points(D60, `38,1406 74,1397 86,1403 126,1403 140,1413 152,1413 167,1406 204,1406 231,1400 245,1420 257,1420 271,1416 283,1416 296,1409 310,1406 323,1406 337,1409 349,1409 364,1407 376,1403 390,1391 402,1394 443,1394 454,1397 494,1397 507,1394 534,1399 547,1413 561,1400 587,1400 599,1397 614,1416 625,1426 639,1416 651,1423 666,1403 678,1403 703,1397 718,1390 743,1413 759,1413 770,1416 784,1416 796,1410 810,1413 822,1413 837,1420 848,1413 863,1420 874,1440 901,1434 915,1424 930,1440 941,1464 955,1447 967,1454 981,1457 993,1451 1019,1470 1034,1451 1046,1450 1060,1447 1072,1447 1086,1454 1152,1438 1165,1445 1179,1454 1190,1454 1217,1476 1231,1458 1243,1467 1257,1454 1269,1467 1283,1452 1309,1434 1323,1430 1335,1440 1350,1444`),
  bands: [1389, 1433, 1480],
  rsiAxis: [["100", 1361, 1]],
  rsiBox: ["45,336", 1442],
  times: [["févr.", 110, 1], ["02", 428], ["03", 743], ["04", 1060]],
  cursor: ["4 févr. 2022 20:00", 1174],
};

const nas15 = {
  view: { x: 2096, w: 806, py: 1186, ph: 400, rh: 68, th: 26 },
  s: NQ,
  body: 14,
  candles: candles(NQ, `g 36 318 321 341 355,r 67 319 323 370 382,g 98 359 370 371 403,r 131 358 368 385 390,r 162 384 384 429 432,g 194 395 406 429 429,g 226 375 375 406 410,g 257 363 370 375 391,g 290 309 317 370 370,r 322 310 318 327 347,r 354 319 327 337 364,r 386 336 337 476 495,r 417 440 476 538 542,g 449 507 509 540 596,g 480 422 433 509 512,g 512 370 390 433 522,g 544 341 374 390 456,g 575 314 328 372 400,r 609 278 328 384 390,r 639 345 386 417 426,r 670 402 417 446 463,r 703 404 446 491 495,g 735 390 406 491 510,g 767 346 359 406 418,r 798 318 357 363 371,g 829 332 345 363 389,r 863 325 343 352 366,g 893 313 323 350 389,g 927 285 290 323 333,g 957 224 236 290 290,g 989 206 231 236 259,g 1021 188 197 231 246,g 1052 184 191 197 226,r 1083 182 191 221 235,g 1117 201 218 220 251,g 1148 168 206 219 226,g 1180 177 180 207 220,g 1212 115 125 180 180,r 1243 121 125 160 169,r 1276 121 159 191 201,r 1307 184 193 261 268,r 1340 244 260 283 317,r 1371 283 283 300 304,g 1403 290 294 300 304`),
  lines: [
    [119, 17, 1421, "r", 1, "L"], [124, 17, 1421, "r", 3], [243, 17, 1421, "k", 1], [334, 17, 1421, "g", 1, "L"], [411, 17, 1421, "r", 2, "W"], [426, 17, 1421, "g", 2],
    [550, 17, 1421, "g", 1, "L"], [285, 1212, 1421, "k", 1, "S"], [402, 1212, 1421, "g", 1, "S"],
  ],
  labels: [["Piv J", 718, 227, "k", "r"], ["mS1 J", 718, 317, "g", "r"], ["mR1 S", 718, 392, "r", "r"], ["S1 J", 718, 409, "g", "r"], ["mS2 J", 718, 534, "g", "r"]],
  copyright: [22, 607],
  axis: [["14 850", 103], ["14 800", 150], ["14 750", 202], ["14 700", 254], ["14 600", 359], ["14 550", 411], ["14 500", 464, 1], ["14 450", 516], ["14 400", 568]],
  boxes: [["14 829,6", 119, "r"], ["14 670,4", 280, "k", 1], ["14 656,9", 305, "y"], ["14 623,7", 334, "g"], ["14 558,4", 403, "g", 1], ["14 417,8", 550, "g"]],
  rsi: points(NQ, `17,685 36,682 67,688 98,686 131,688 162,691 194,684 226,679 257,677 290,668 354,672 386,682 417,686 449,683 480,674 512,668 544,668 575,662 609,668 670,672 703,675 735,668 767,665 829,662 863,664 893,661 927,659 957,655 989,655 1021,652 1052,652 1083,655 1148,655 1180,654 1212,650 1276,657 1307,664 1371,668 1421,668`),
  bands: [644, 664, 686],
  rsiLevel: 665.5,
  fifty: [22, 656, true],
  rsiAxis: [["100", 635, 1]],
  rsiBox: ["46,265", 668],
  times: [["12:00", 67], ["13:00", 195], ["14:00", 321], ["15:00", 449], ["16:00", 575], ["17:00", 703], ["18:00", 829], ["19:00", 957], ["20:00", 1084], ["21:00", 1212], ["22:00", 1340]],
  more: true,
};

const nas60 = {
  view: { x: 2096, w: 806, py: 1736, ph: 460, rh: 80, th: 27 },
  s: NQ,
  body: 14,
  candles: candles(NQ, `r 36 927 936 938 943,r 67 927 938 939 949,r 98 930 937 944 952,g 131 860 868 945 950,r 162 850 866 883 911,r 195 868 882 936 946,r 226 915 936 937 953,g 257 914 922 938 981,g 290 892 912 922 970,r 321 900 912 1030 1038,g 354 923 1018 1030 1058,g 386 874 978 1019 1051,r 417 915 978 1065 1067,g 449 1036 1065 1066 1106,r 480 1018 1065 1075 1102,r 511 1034 1075 1150 1175,r 544 1095 1149 1245 1295,g 575 912 922 1250 1250,r 609 917 922 963 1006,r 639 941 965 967 994,g 670 946 964 967 984,r 703 956 964 1021 1036,g 735 967 987 1021 1021,g 767 958 969 987 992,g 798 946 952 969 980,g 829 917 922 952 952,g 863 908 918 922 936,r 893 899 918 990 1006,r 927 954 989 1004 1035,r 957 989 1003 1050 1055,r 989 1038 1050 1118 1160,r 1021 1115 1118 1230 1231,g 1053 1102 1113 1230 1230,r 1083 1105 1113 1341 1345,g 1117 1137 1170 1343 1400,r 1148 1072 1170 1245 1262,g 1180 1113 1160 1245 1311,g 1212 1079 1084 1160 1186,g 1243 973 983 1084 1084,g 1276 957 971 983 1045,r 1307 902 969 1052 1062,r 1340 1036 1052 1093 1111,g 1371 1095 1095 1096 1096`),
  lines: [
    [911, 17, 1402, "r", 3], [908, 670, 1402, "r", 1, "L"], [1036, 670, 1402, "k", 2], [1129, 670, 1402, "s", 1, "L"], [1211, 17, 1402, "r", 2, "W"], [1225, 670, 1402, "g", 2],
    [1353, 670, 1402, "g", 2, "L"], [850, 1307, 1402, "r", 1, "S"], [1078, 1307, 1402, "k", 2, "S"], [1202, 1307, 1402, "g", 1, "S"],
    [828, 1402, 1421, "r", 1], [862, 1402, 1421, "r", 1], [962, 1402, 1421, "r", 1], [972, 1402, 1421, "k", 2], [995, 1402, 1421, "r", 2], [1131, 1402, 1421, "k", 2],
    [1169, 1402, 1421, "g", 1], [1243, 1402, 1421, "g", 1], [1247, 1402, 1421, "g", 2], [1362, 1402, 1421, "g", 2], [1377, 1402, 1421, "g", 2],
  ],
  labels: [
    ["R1 S", 709, 892, "r", "r"], ["mR1 J", 1037, 891, "r", "r"], ["Piv J", 1037, 1019, "k", "r"], ["mS1 J", 1037, 1113, "g", "r"], ["mR1 S", 709, 1191, "r", "r"],
    ["S1 J", 1037, 1209, "g", "r"], ["mS2 J", 1037, 1337, "g", "r"], ["R1 S", 1407, 846, "r"], ["Piv S", 1407, 954, "k"], ["Piv J", 1407, 1114, "k"], ["S1 J", 1409, 1346, "g"],
  ],
  copyright: [22, 1416],
  axis: [["14 900", 831], ["14 850", 884], ["14 800", 938], ["14 750", 993], ["14 700", 1048], ["14 600", 1157], ["14 550", 1211], ["14 500", 1266, 1], ["14 450", 1318], ["14 400", 1373]],
  boxes: [["14 883,0", 850, "r", 1], ["14 829,6", 907, "r"], ["14 670,4", 1074, "k", 1], ["14 656,9", 1101, "y"], ["14 623,7", 1129, "g"], ["14 558,4", 1202, "g", 1], ["14 417,8", 1353, "g"]],
  rsi: points(NQ, `17,1497 67,1497 98,1498 131,1489 162,1489 195,1493 226,1493 257,1491 290,1491 321,1498 354,1496 386,1493 417,1498 480,1498 544,1507 575,1480 609,1482 670,1482 703,1485 829,1478 863,1478 893,1483 957,1487 1021,1498 1053,1489 1083,1498 1117,1487 1148,1491 1180,1486 1243,1478 1276,1476 1307,1482 1340,1484 1371,1484`),
  bands: [1458, null, 1503],
  rsiLevel: 1480,
  rsiAxis: [["100", 1443, 1]],
  rsiBox: ["47,724", 1483],
  times: [["07:00", 98], ["10:00", 195], ["13:00", 290], ["16:00", 386], ["19:00", 480], ["22:00", 575], ["04", 639, 1], ["04:00", 767], ["07:00", 863], ["10:00", 957], ["13:00", 1053], ["16:00", 1148], ["19:00", 1243], ["22:00", 1340], ["07", 1402, 1]],
};

const nas5 = {
  view: { x: 2981, w: 1036, py: 1186, ph: 927, rh: 163, th: 27 },
  s: N5,
  body: 8,
  candles: candles(N5, `r 25 1000 1000 1056 1130,g 44 998 1023 1056 1114,r 61 971 1023 1083 1104,g 80 987 1010 1083 1145,r 98 982 1010 1083 1096,r 116 1074 1083 1213 1222,g 135 1106 1124 1213 1262,g 154 1087 1111 1126 1190,g 172 926 969 1115 1115,g 190 854 884 971 1001,g 210 803 857 884 890,g 228 803 836 855 885,g 246 733 816 835 850,r 264 803 818 828 869,r 283 720 828 850 856,r 301 825 848 864 919,g 320 816 834 864 921,g 339 762 796 834 919,r 358 742 796 799 844,r 375 758 799 828 862,g 394 769 819 830 861,r 413 751 816 859 919,g 430 769 772 860 878,g 449 704 736 774 798,g 468 676 686 736 764,r 485 651 684 698 722,g 505 628 641 698 719,g 523 488 503 641 641,g 543 477 494 503 533,g 560 455 491 494 523,r 579 478 491 516 551,g 598 404 411 516 531,r 615 411 411 476 515,g 634 423 431 475 503,r 652 427 433 487 521,g 672 361 377 487 487,r 689 376 379 406 461,g 708 343 357 406 409,r 727 342 355 365 410,r 744 339 364 408 425,g 763 345 357 408 429,r 782 341 357 446 488,r 799 430 446 530 533,g 819 422 455 528 533,g 838 394 442 455 467,g 857 337 368 443 461,g 873 298 348 371 373,r 893 325 346 403 424,r 911 386 402 408 447,g 929 341 348 410 421,g 948 320 332 348 373,g 966 235 236 329 331,g 986 204 231 236 261,g 1003 146 179 232 243,r 1022 166 179 271 279,g 1041 217 222 271 282,r 1058 189 222 272 300,g 1077 166 206 273 276,r 1096 204 204 257 264,r 1113 251 258 366 387,r 1132 341 366 438 488,r 1151 386 438 444 539,r 1171 444 444 557 580,r 1187 511 557 662 685,r 1206 648 662 673 697,g 1226 621 625 673 715,r 1243 621 623 673 681,g 1261 655 660 673 676,r 1281 642 660 669 678,g 1300 657 662 669 683,r 1317 647 661 663 671,g 1336 653 657 662 674,r 1355 651 657 666 674,r 1372 650 664 671 681,g 1391 664 668 671 681,g 1410 669 669 670 670`),
  lines: [
    [157, 12, 1427, "r", 1, "L"], [169, 12, 1427, "r", 3], [323, 12, 1427, "k", 1, "O"], [511, 12, 1427, "k", 2], [769, 12, 1427, "g", 2, "L"], [990, 12, 1427, "r", 2, "W"],
    [1027, 12, 1427, "g", 2], [1216, 12, 1427, "b", 1, "O"], [1297, 12, 1427, "k", 1, "O"], [336, 1427, 1458, "k", 2], [402, 1427, 1458, "r", 1, "L"], [770, 1427, 1458, "k", 2], [1088, 1427, 1458, "g", 2, "W"],
  ],
  labels: [
    ["mR1 J", 719, 141, "r", "r"], ["R1 S", 719, 149, "r", "r"], ["Clo (J, Pré)", 23, 307, "k"], ["Piv J", 719, 494, "k", "r"], ["mS1 J", 719, 752, "g", "r"], ["mR1 S", 719, 970, "r", "r"],
    ["S1 J", 719, 1010, "g", "r"], ["Bas (J, Pré)", 23, 1200, "b"], ["Clo (S, Pré)", 1308, 1281, "k", "r"], ["Piv S", 1431, 318, "k"], ["Piv J", 1431, 755, "k"],
  ],
  copyright: [18, 1306],
  axis: [["14 850", 103], ["14 800", 245], ["14 750", 393], ["14 700", 543], ["14 650", 691], ["14 600", 839], ["14 550", 987], ["14 500", 1138, 1]],
  boxes: [["14 829,6", 157, "r"], ["14 656,9", 669, "y"], ["14 623,7", 768, "g"], ["14 445,9", 1298, "k"]],
  rsi: points(N5, `12,1431 25,1434 44,1431 61,1437 80,1430 98,1435 116,1444 135,1437 154,1435 172,1422 190,1417 210,1413 228,1413 246,1411 264,1411 301,1417 339,1409 358,1409 375,1415 394,1413 413,1421 430,1410 468,1399 485,1403 505,1395 523,1385 543,1382 560,1382 579,1388 598,1379 615,1392 634,1388 652,1399 672,1389 689,1393 708,1389 727,1391 744,1398 763,1395 799,1422 819,1413 838,1412 857,1404 873,1402 893,1411 911,1411 929,1404 948,1402 966,1394 986,1392 1003,1388 1022,1404 1041,1399 1058,1408 1077,1400 1096,1410 1113,1426 1132,1435 1151,1435 1171,1447 1187,1456 1206,1456 1226,1449 1243,1454 1261,1451 1281,1452 1336,1449 1355,1451 1410,1451`),
  bands: [1377, null, 1474],
  rsiLevel: 1426,
  fifty: [20, 1416, false],
  rsiAxis: [["100", 1333, 1], ["80", 1368], ["60", 1406], ["40", 1444], ["20", 1483]],
  rsiBox: ["36,553", 1450],
  times: [["17:00", 80], ["18:00", 301], ["19:00", 523], ["20:00", 744], ["21:00", 967], ["22:00", 1187], ["07", 1427, 1]],
};

/* ---------- icons ---------- */

const CandleIcon = () => (
  <svg className="h-6 w-[22px] shrink-0" viewBox="0 0 22 24">
    <path d="M6 7v15M16 1v21" stroke="#8a1f24" strokeWidth="2" />
    <path d="M16 1v21" stroke="#0a7a14" strokeWidth="2" />
    <rect x="1.5" y="9.500" width="8" height="10" fill="#f07a7e" stroke="#a62228" strokeWidth="1.500" />
    <rect x="11.500" y="5" width="8.500" height="13" fill="#57dc57" stroke="#0b8a16" strokeWidth="1.500" />
  </svg>
);

const ChainIcon = ({ kind }) => (
  <svg className="h-[26px] w-[16px] shrink-0" viewBox="0 0 16 26" fill="none">
    {kind === "linked" ? (
      <>
        <rect x="4" y="2" width="8" height="10" rx="4" stroke="#5d6b70" strokeWidth="4" />
        <rect x="4" y="14" width="8" height="10" rx="4" stroke="#5d6b70" strokeWidth="4" />
        <rect x="4" y="2" width="8" height="10" rx="4" stroke="#fff" strokeWidth="2" />
        <rect x="4" y="14" width="8" height="10" rx="4" stroke="#fff" strokeWidth="2" />
        <path d="M8 8v10" stroke="#5d6b70" strokeWidth="4" />
        <path d="M8 8v10" stroke="#e9eef0" strokeWidth="2" />
      </>
    ) : (
      <>
        <path d="M4 11V6.500a4 4 0 0 1 8 0V11M4 15v4.500a4 4 0 0 0 8 0V15" stroke="#4c5c63" strokeWidth="4" />
        <path d="M4 10V6.500a4 4 0 0 1 8 0V10M4 16v3.500a4 4 0 0 0 8 0V16" stroke="#8fa1a8" strokeWidth="2" />
        <path d="M8 7v3M8 16v3" stroke="#4c5c63" strokeWidth="1.500" />
        {kind === "check" && <path d="M6 19l3 4 5-10" stroke="#fff" strokeWidth="4.500" />}
        {kind === "check" && <path d="M6 19l3 4 5-10" stroke="#1358d8" strokeWidth="2.500" />}
      </>
    )}
  </svg>
);

const RefreshIcon = () => (
  <svg className="h-6 w-[26px]" viewBox="0 0 26 24" fill="none">
    <path d="M16 2.500C10 1 6.500 5 6.500 11" stroke="#e0393b" strokeWidth="3.500" />
    <path d="M1 10.500h11L6.500 18z" fill="#e0393b" />
    <path d="M10 21.500C16 23 19.500 19 19.500 13" stroke="#1fae28" strokeWidth="3.500" />
    <path d="M14 13.500h11L19.500 6z" fill="#18b522" />
  </svg>
);

const Arrow = ({ className = "" }) => (
  <svg className={"pointer-events-none h-[6px] w-[10px] shrink-0 " + className} viewBox="0 0 10 6"><path d="M0 0h10L5 6z" fill="#000" /></svg>
);

const KeyboardUp = () => (
  <svg className="h-5 w-6" viewBox="0 0 24 20">
    <path d="M12 0l5 5h-3.500v5h-3V5H7z" fill="#1a5fd0" />
    <rect x="0.500" y="11.500" width="23" height="8" rx="1" fill="#fff" stroke="#8a979c" />
    <path d="M3 13.500h4v4H3zM8 13.500h3.500v4H8zM12.500 13.500H16v4h-3.500zM17 13.500h4v4h-4z" fill="#2c2c2c" />
  </svg>
);

/* ---------- window parts ---------- */

const Picker = ({ label, value, bold }) => (
  <label className="flex h-full items-center gap-[7px] border-r border-[#6f8b96] pr-[6px] pl-[6px]">
    <select aria-label={label} defaultValue={value} className={"appearance-none bg-transparent text-base leading-6 text-black outline-none " + (bold ? "font-bold" : "")}>
      <option>{value}</option>
    </select>
    <Arrow />
  </label>
);

const TitleBar = ({ symbol, period, change, market, chain, zoomed }) => (
  <div className="flex h-[34px] shrink-0 border-b-2 border-[#456068] bg-linear-to-b from-[#b6d7e4] to-[#9bbbc8]">
    <div className="flex w-[68px] shrink-0 items-center gap-2 pl-[6px] text-[#6e8893]">
      <button aria-label="Fermer">
        <svg className="size-[14px]" viewBox="0 0 14 14"><path d="M1 1l12 12M13 1L1 13" stroke="currentColor" strokeWidth="2" /></svg>
      </button>
      <button aria-label="Réduire">
        <svg className="size-[14px]" viewBox="0 0 14 14"><path d="M0 12h14" stroke="currentColor" strokeWidth="2.500" /></svg>
      </button>
      <button aria-label="Agrandir" className={zoomed ? "rounded-sm border border-[#6e8893] bg-[#d5e4ea] px-[2px] py-[3px]" : ""}>
        <svg className="size-[14px]" viewBox="0 0 14 14"><path d="M1 1h12v12H1z" fill="none" stroke="currentColor" strokeWidth="1.500" /><path d="M0 2h14" stroke="currentColor" strokeWidth="2.500" /></svg>
      </button>
    </div>
    <div className="flex min-w-0 flex-1 items-center justify-center overflow-hidden whitespace-nowrap text-base leading-6">
      <button aria-label="Type de graphique" className="flex h-full items-center border-r border-[#6f8b96] pr-1"><CandleIcon /></button>
      <button aria-label="Lier les fenêtres" className="flex h-full items-center border-r border-[#6f8b96] px-1"><ChainIcon kind={chain} /></button>
      <Picker label="Valeur" value={symbol} bold />
      <Picker label="Unité de temps" value={period} bold />
      <Picker label="Nombre d'unités" value="100 unités" />
      <button aria-label="Informations" className="mr-[10px] ml-[11px] flex h-4 w-4 items-center justify-center border-2 border-[#8d9ba1] bg-white font-['Liberation_Serif'] text-sm leading-3 font-bold text-[#7d8b91]">i</button>
      <span className="font-bold text-[#a50000]">{change}</span>
      <span className="ml-[6px] font-bold">4 févr. 2022</span>
      <span className="mx-[5px] size-[13px] rounded-full border-2 border-[#dfe9ed] bg-[#8c8c8c]" />
      <span>{market}</span>
    </div>
    <button aria-label="Actualiser" className={"flex w-[33px] shrink-0 items-center justify-center " + (zoomed === undefined ? "bg-[#b3cad3]" : "bg-white")}><RefreshIcon /></button>
  </div>
);

const PriceButton = ({ label, head, main, tail, color }) => (
  <div className="flex w-[111px] flex-col items-center">
    <span className="text-base leading-5">{label}</span>
    <button aria-label={label} className={"flex h-10 w-full items-stretch justify-center gap-[2px] rounded-sm border text-white [text-shadow:1px_1px_1px_rgba(0,0,0,0.45)] " + color}>
      <span className="self-end pb-1 text-base leading-5">{head}</span>
      <span className="self-center text-[32px] leading-9">{main}</span>
      <span className="self-start pt-1 text-base leading-5">{tail}</span>
    </button>
  </div>
);

const OrderBar = ({ sell, buy, limit, stop }) => (
  <div className="flex shrink-0 items-start gap-1 border-l border-[#6f8b96] pr-[2px] pl-1 text-base">
    <div className="flex flex-col gap-1 pt-[5px]">
      <button aria-label="Réglages" className="flex size-[25px] items-center justify-center rounded-sm border border-[#8b9ba2] bg-linear-to-b from-white to-[#dadada]"><Wrench size={19} strokeWidth={1.5} /></button>
      <button aria-label="Clavier" className="flex h-[19px] w-[25px] items-center justify-center rounded-sm bg-[#8fa2aa]">
        <svg className="h-[13px] w-[21px]" viewBox="0 0 21 13" fill="#fff"><path d="M0 0h3v3H0zM4.500 0h3v3h-3zM9 0h3v3H9zM13.500 0h3v3h-3zM18 0h3v3h-3zM0 4.500h3v3H0zM4.500 4.500h3v3h-3zM9 4.500h3v3H9zM13.500 4.500h3v3h-3zM18 4.500h3v3h-3zM6 10h9v3H6z" /></svg>
      </button>
    </div>
    <label className="flex w-[76px] flex-col items-center leading-5">
      Qté
      <input defaultValue="0.5" className="h-[30px] w-full rounded-sm border border-[#6f8b96] bg-white pr-1 text-right text-base" />
    </label>
    <div className="mx-[2px] mt-2 h-[44px] w-px bg-[#6f8b96]" />
    <PriceButton label="Vendre" {...sell} color="border-[#c83c3e] bg-linear-to-b from-[#ee5a5c] to-[#da4446]" />
    <PriceButton label="Acheter" {...buy} color="border-[#1f9f22] bg-linear-to-b from-[#3fc83f] to-[#28b028]" />
    <div className="mt-2 h-[44px] w-px bg-[#6f8b96]" />
    <div className="ml-[10px] flex flex-col gap-[2px] pt-px">
      <div className="flex h-[30px] items-center gap-1">
        <label className="flex w-[42px] items-center gap-[6px]"><input type="checkbox" className="size-[15px] appearance-none rounded-sm border border-[#8b9ba2] bg-white" />L</label>
        <input aria-label="Limite en points" defaultValue={limit} className="h-[29px] w-[27px] rounded-sm border border-[#6f8b96] bg-white text-center text-base text-[#8b9ba2]" />
        <span>pts</span>
      </div>
      <div className="flex h-[30px] items-center gap-1">
        <label className="relative flex w-[42px] items-center gap-[6px] text-[#a4a4a4]">
          <input type="checkbox" defaultChecked disabled className="size-[15px] appearance-none rounded-sm border border-[#a4a4a4] bg-white" />
          <svg className="absolute left-[3px] size-[10px]" viewBox="0 0 10 10"><path d="M1 5l3 4 5-8" fill="none" stroke="#9a9a9a" strokeWidth="2" /></svg>
          Sg
        </label>
        <input aria-label="Stop en points" defaultValue={stop} className="h-[29px] w-9 rounded-sm border border-[#6f8b96] bg-white text-center text-base" />
        <span>pts</span>
      </div>
    </div>
  </div>
);

const SWATCH = {
  price: <><i className="h-full w-1/2 bg-[#ff9a66]" /><i className="h-full w-1/2 bg-[#c8ff32]" /></>,
  pivot: <><i className="h-full w-1/3 bg-black" /><i className="h-full w-1/3 bg-[#008000]" /><i className="h-full w-1/3 bg-[#ff0000]" /></>,
  none: <i className="h-full w-full border border-[#7b8f98] bg-[#d6e1e6]" />,
  low: <i className="h-full w-full bg-[#dc6464]" />,
  high: <i className="h-full w-full bg-[#50d250]" />,
  close: <i className="h-full w-full bg-black" />,
};

const Tab = ({ kind, children }) => (
  <button className="flex h-6 shrink-0 items-center gap-1 border-r border-b-2 border-[#7b929c] bg-[#cbd9df] px-1 text-base leading-5 whitespace-nowrap">
    <span className="flex h-[14px] w-[14px] shrink-0">{SWATCH[kind]}</span>
    {children}
  </button>
);

const Label = ({ view, top, height, s, item }) => {
  const [text, x, y, ink, side, big] = item;
  const left = ((s.x(x) - view.x) / view.w) * 100;
  const style = { top: ((s.y(y) - top) / height) * 100 + "%" };
  if (side === "r") style.right = 100 - left + "%";
  else style.left = left + "%";
  return <span className={"absolute -translate-y-1/2 leading-5 whitespace-nowrap " + INK[ink] + (big ? " text-lg" : " text-base")} style={style}>{text}</span>;
};

const BOX = {
  g: "border-[#7b929c] bg-linear-to-b from-white to-[#cfdcf6] text-[#007d00]",
  r: "border-[#7b929c] bg-linear-to-b from-white to-[#cfdcf6] text-[#ff0000]",
  k: "border-[#7b929c] bg-linear-to-b from-white to-[#cfdcf6] text-black",
  y: "border-[#8a7a20] bg-linear-to-b from-[#ffe23c] to-[#f5b800] text-black",
};

const Axis = ({ s, top, height, ticks, boxes }) => {
  const at = (y) => ({ top: ((s.y(y) - top) / height) * 100 + "%" });
  return (
    <div className="relative w-[77px] shrink-0 overflow-hidden border-l border-[#6f8b96] bg-white">
      {ticks.map(([text, y, bold]) => (
        <div key={text} className="absolute flex -translate-y-1/2 items-center gap-1 whitespace-nowrap" style={at(y)}>
          <i className="h-px w-[5px] bg-[#5c7681]" />
          <span className={bold ? "text-lg leading-5 font-bold" : "text-[17px] leading-5"}>{text}</span>
        </div>
      ))}
      {boxes.map(([text, y, kind, small]) => (
        <div key={text} className="absolute flex -translate-y-1/2 items-center whitespace-nowrap" style={at(y)}>
          <i className="h-[2px] w-[5px] bg-black" />
          <span className={"border px-[2px] leading-[18px] " + (small ? "text-[15px] " : "text-[17px] ") + BOX[kind]}>{text}</span>
        </div>
      ))}
    </div>
  );
};

const snap = (v) => Math.round(v) + 0.5;

const Plot = ({ d }) => {
  const { view, s } = d;
  return (
    <svg className="absolute inset-0 h-full w-full" viewBox={`${view.x} ${view.py} ${view.w} ${view.ph}`} preserveAspectRatio="none">
      {d.candles.map((c, i) => {
        const x = snap(c.x - d.body / 2 - 0.5);
        const top = snap(c.top - 0.5);
        const ink = c.up ? "#8cbb00" : "#c0561f";
        return (
          <g key={i} stroke={ink} strokeWidth="1">
            <path d={`M${x + d.body / 2} ${Math.round(c.hi)}V${Math.round(c.lo)}`} strokeWidth="1.4" />
            <rect x={x} y={top} width={d.body} height={Math.max(1, snap(c.bot - 0.5) - top)} fill={c.up ? "url(#rise)" : "url(#fall)"} />
          </g>
        );
      })}
      {d.lines.map(([y, x1, x2, ink, w, dash], i) => {
        const sw = lineWidth(w, ink, dash);
        const py = sw === 2 ? Math.round(s.y(y)) : Math.floor(s.y(y)) + 0.5;
        return <path key={i} d={`M${s.x(x1)} ${py}H${s.x(x2)}`} stroke={STROKE[ink]} strokeWidth={sw} strokeDasharray={dash ? DASH[dash] : undefined} />;
      })}
    </svg>
  );
};

const Rsi = ({ d }) => {
  const { view, s } = d;
  const y0 = view.py + view.ph + 1;
  const line = d.rsi.map((p) => p[0].toFixed(1) + "," + p[1].toFixed(1)).join(" ");
  const [hi, mid, lo] = d.bands.map((b) => (b === null ? null : Math.round(s.y(b))));
  const id = "band" + view.x + view.py;
  const first = d.rsi[0][0];
  const last = d.rsi[d.rsi.length - 1][0];
  return (
    <svg className="absolute inset-0 h-full w-full" viewBox={`${view.x} ${y0} ${view.w} ${view.rh - 1}`} preserveAspectRatio="none">
      <clipPath id={id + "h"}><rect x={view.x} y={y0} width={view.w} height={hi - y0} /></clipPath>
      <clipPath id={id + "l"}><rect x={view.x} y={lo} width={view.w} height="80" /></clipPath>
      <polygon points={`${first},${hi} ${line} ${last},${hi}`} fill="#cdc0d8" clipPath={`url(#${id}h)`} />
      <polygon points={`${first},${lo} ${line} ${last},${lo}`} fill="#c3ead8" clipPath={`url(#${id}l)`} />
      <path d={`M${view.x} ${hi}H${view.x + view.w}M${view.x} ${lo}H${view.x + view.w}`} stroke="#2d2ddc" strokeWidth="2.500" />
      {mid !== null && <path d={`M${view.x} ${mid + 0.5}H${view.x + view.w}`} stroke="#2d2ddc" strokeWidth="1.500" />}
      {d.rsiLevel && <path d={`M${view.x} ${snap(s.y(d.rsiLevel))}H${view.x + view.w}`} stroke="#10102a" strokeWidth="1" />}
      <polyline points={line} fill="none" stroke="#000" strokeWidth="1.500" />
    </svg>
  );
};

const Panel = ({ d, title, order, tabs, rsiTab = true, footer, className = "" }) => {
  const { view, s } = d;
  const rsiTop = view.py + view.ph;
  const pct = (x) => ((s.x(x) - view.x) / view.w) * 100 + "%";
  return (
    <section className={"flex min-h-0 min-w-0 flex-col overflow-hidden border-t-2 border-r-2 border-[#456068] bg-white text-black " + className}>
      <TitleBar {...title} />
      <div className={"flex shrink-0 border-b border-[#6f8b96] text-base " + (order ? "h-16" : "h-5")}>
        <div className="flex flex-1 items-center justify-evenly leading-[19px] whitespace-nowrap">
          <span>Portefeuille : <b className="ml-[2px]">1 507,51 €</b></span>
          <span>Gain Jour : <b className="ml-[2px]">0,00 pts</b></span>
        </div>
        {order && <OrderBar {...order} />}
      </div>
      <div className="flex min-h-0 basis-0" style={{ flexGrow: view.ph }}>
        <div className="relative min-w-0 flex-1 overflow-hidden bg-linear-to-b from-white via-[#f0f4ff] to-[#dee6ff]">
          <Plot d={d} />
          {d.labels.map((item, i) => <Label key={i} view={view} top={view.py} height={view.ph} s={s} item={item} />)}
          <span className="absolute -translate-y-1/2 leading-5 whitespace-nowrap" style={{ left: pct(d.copyright[0]), top: ((s.y(d.copyright[1]) - view.py) / view.ph) * 100 + "%" }}>
            © IT-Finance.com <em className="ml-[6px]">Données indicatives</em>
          </span>
          {tabs && <div className={"absolute top-0 flex " + (order ? "-left-2" : "left-0")}>{tabs.map(([kind, text]) => <Tab key={text} kind={kind}>{text}</Tab>)}</div>}
        </div>
        <Axis s={s} top={view.py} height={view.ph} ticks={d.axis} boxes={d.boxes} />
      </div>
      <div className="flex min-h-0 basis-0 border-t border-[#6f8b96]" style={{ flexGrow: view.rh }}>
        <div className="relative min-w-0 flex-1 overflow-hidden bg-linear-to-b from-[#dfe7ff] to-[#d9e5ff]">
          <Rsi d={d} />
          {d.fifty && <span className={"absolute -translate-y-1/2 text-base leading-[18px] " + (d.fifty[2] ? "border border-black bg-white px-1" : "")} style={{ left: d.fifty[2] ? 0 : pct(d.fifty[0]), top: ((s.y(d.fifty[1]) - rsiTop) / view.rh) * 100 + "%" }}>50</span>}
          {rsiTab && <div className={"absolute top-0 " + (order ? "-left-1" : "left-0")}><Tab kind="close">RSI (14)</Tab></div>}
        </div>
        <Axis s={s} top={rsiTop + 1} height={view.rh - 1} ticks={d.rsiAxis} boxes={[[d.rsiBox[0], d.rsiBox[1], "k"]]} />
      </div>
      <div className={"flex shrink-0 overflow-hidden border-t border-[#6f8b96] bg-white " + (view.th < 20 ? "h-[13px]" : view.th === 26 ? "h-[26px]" : "h-[27px]")}>
        <div className="relative min-w-0 flex-1">
          {d.times.map(([text, x, bold], i) => (
            <div key={i} className="absolute top-0 flex -translate-x-1/2 flex-col items-center whitespace-nowrap" style={{ left: pct(x) }}>
              <i className="h-1 w-px bg-[#5c7681]" />
              <span className={bold ? "text-[17px] leading-[22px] font-bold" : "text-[17px] leading-[22px]"}>{text}</span>
            </div>
          ))}
          {(d.extraTicks || []).map((x) => <i key={x} className="absolute top-0 h-1 w-px bg-[#5c7681]" style={{ left: pct(x) }} />)}
          {d.cursor && <span className="absolute top-1 right-[-44px] z-10 border border-[#555] bg-[#ffff28] text-right text-[17px] leading-5 whitespace-nowrap" style={{ left: pct(d.cursor[1]) }}>{d.cursor[0]}</span>}
          {d.more && <button aria-label="Suite" className="absolute top-0 right-0 h-full w-6 border-l border-[#6f8b96] bg-linear-to-b from-white to-[#dcdcdc] text-xl leading-5">»</button>}
        </div>
        <div className="flex w-[77px] shrink-0 items-start justify-end">
          <button aria-label="Afficher le clavier" className="flex h-[26px] w-[35px] items-center justify-center border-t border-l border-[#6f8b96] bg-white"><KeyboardUp /></button>
        </div>
      </div>
      {footer}
    </section>
  );
};

/* ---------- bottom toolbar ---------- */

const Magnifier = ({ sign, faded }) => (
  <svg className={"h-[26px] w-[26px] " + (faded ? "opacity-50" : "")} viewBox="0 0 26 26">
    <path d="M15 15l8 9" stroke="#000" strokeWidth="4.500" />
    <circle cx="11" cy="10" r="8" fill={faded ? "#aebfc6" : "#fff"} stroke="#222" strokeWidth="1.500" />
    {sign && <path d={sign === "+" ? "M6 10h10M11 5v10" : "M7 10h8"} stroke="#1020d8" strokeWidth="3" />}
    {faded && <path d="M22 2v10M20 4l2-3 2 3M20 10l2 3 2-3M3 23h10" stroke="#2040c0" fill="none" strokeWidth="1.500" />}
  </svg>
);

const Toolbar = () => (
  <div className="flex h-[34px] shrink-0 items-center border-t-2 border-[#6f8b96] bg-[#9bbac6]">
    <button aria-label="Dessin" className="flex h-full w-11 items-center justify-center">
      <svg className="h-7 w-7" viewBox="0 0 28 28"><path d="M3 4l9 19L22 4" fill="none" stroke="#d22" strokeWidth="1.500" /><path d="M3 24h12" stroke="#1a1" strokeWidth="2" /><path d="M20 4l5 3-9 15-5 3 1-6z" fill="#ffd23c" stroke="#7a4a10" /></svg>
    </button>
    <button aria-label="Options de dessin" className="flex h-full w-[18px] items-center justify-center border-r border-[#6f8b96]"><Arrow /></button>
    <button aria-label="Indicateurs" className="flex h-full w-10 items-center justify-center bg-white">
      <svg className="h-7 w-7" viewBox="0 0 28 28"><path d="M1 15C6-3 12 0 15 9s7 9 12 3" fill="none" stroke="#1a9a22" strokeWidth="1.800" /><path d="M1 13c5-8 8 4 13 4s7-10 13-7" fill="none" stroke="#d22" strokeWidth="1.800" /><path d="M2 20h4v2h5v-3h4v4h5v-4h5v8H2z" fill="#12b422" /><path d="M7 19h3v3H7zM16 19h3v3h-3z" fill="#e02020" /></svg>
    </button>
    <button aria-label="Options d'indicateurs" className="flex h-full w-5 items-center justify-center border-l border-[#aaa] bg-white"><Arrow /></button>
    <button aria-label="Partager" className="flex h-full w-8 items-center justify-center bg-[#1f8fdc]">
      <svg className="size-6" viewBox="0 0 24 24" fill="#fff"><path d="M5 12L19 4M5 12l14 8" stroke="#fff" strokeWidth="2.500" /><circle cx="5" cy="12" r="4" /><circle cx="19" cy="4.500" r="3.500" /><circle cx="19" cy="19.500" r="3.500" /></svg>
    </button>
    <button aria-label="Messages" className="flex h-full w-[34px] items-center justify-center">
      <svg className="h-6 w-6" viewBox="0 0 24 24"><path d="M3 1h10l4 4v14H3z" fill="#fff" stroke="#8a979c" /><path d="M6 9h14a3 3 0 0 1 3 3v4a3 3 0 0 1-3 3h-3l-2 4-3-4H7a3 3 0 0 1-3-3v-5z" fill="#3f78e0" /><path d="M8 14h2M13 14h2M18 14h2" stroke="#fff" strokeWidth="2" /></svg>
    </button>
    <button aria-label="Carnet" className="flex h-full w-[34px] items-center justify-center">
      <svg className="h-6 w-[18px]" viewBox="0 0 18 24"><path d="M1 1h16v22H1z" fill="#f4f4f4" stroke="#444" /><path d="M3 4h7M3 8h9M3 12h9M3 16h8M3 20h7" stroke="#333" strokeWidth="1.800" /><path d="M11 2h6v8z" fill="#e03a3a" /><path d="M11 22h6v-8z" fill="#25b035" /></svg>
    </button>
    <button aria-label="Ordres" className="flex h-full w-[34px] items-center justify-center">
      <svg className="h-6 w-6" viewBox="0 0 24 24"><path d="M1 2h14v4H1zM3 8h12v4H3zM1 14h14v4H1zM4 20h11v3H4z" fill="#18a828" stroke="#0c6a18" /><path d="M15 1h7v4h-7zM15 7h5v4h-5zM15 13h8v4h-8z" fill="#e86a6a" stroke="#a32" /></svg>
    </button>
    <button aria-label="Fenêtres" className="flex h-full w-[34px] items-center justify-center">
      <svg className="h-[26px] w-6" viewBox="0 0 24 26"><path d="M1 1h14v15H1z" fill="#fff" stroke="#1b50c0" strokeWidth="1.500" /><path d="M1 1h14v4H1z" fill="#2a62d8" /><path d="M3 12l3-4 3 3 3-4" stroke="#1a9a22" fill="none" /><path d="M9 10h14v15H9z" fill="#fff" stroke="#1b50c0" strokeWidth="1.500" /><path d="M9 10h14v4H9z" fill="#2a62d8" /><path d="M11 21l3-4 3 3 4-4" stroke="#1a9a22" fill="none" strokeWidth="1.500" /></svg>
    </button>
    <button aria-label="Outils de prix" className="flex h-full w-[34px] items-center justify-center">
      <svg className="h-[26px] w-6" viewBox="0 0 24 26"><path d="M5 8v17M19 0v22" stroke="#555" /><path d="M2 13h7v9H2z" fill="#e85a5a" stroke="#922" /><path d="M15 3h7v14h-7z" fill="#3fd03f" stroke="#176" /><path d="M7 20l9-12 3 3-9 11z" fill="#fff" stroke="#111" strokeWidth="1.500" /></svg>
    </button>
    <button aria-label="Replier" className="w-[22px] text-center text-2xl leading-7 text-[#24363d]">«</button>
    <button aria-label="Défiler à gauche" className="flex h-[26px] w-[22px] items-center justify-center rounded border border-[#7b98a4] bg-[#a9c9d5]"><svg className="h-[10px] w-[6px]" viewBox="0 0 6 10"><path d="M6 0v10L0 5z" /></svg></button>
    <div className="flex h-[26px] flex-1 justify-end border-y border-[#7b98a4] bg-[#93b3bf]"><div className="h-full w-1/6 bg-linear-to-b from-[#bfe0ea] to-[#9dbfcc]" /></div>
    <button aria-label="Défiler à droite" className="flex h-[26px] w-[22px] items-center justify-center rounded border border-[#7b98a4] bg-[#a9c9d5]"><svg className="h-[10px] w-[6px]" viewBox="0 0 6 10"><path d="M0 0v10l6-5z" /></svg></button>
    <div className="flex items-center gap-[9px] pr-1 pl-2">
      <button aria-label="Ajuster"><Magnifier faded /></button>
      <button aria-label="Zoom arrière"><Magnifier sign="-" /></button>
      <button aria-label="Zoom avant"><Magnifier sign="+" /></button>
      <button aria-label="Masquer le clavier">
        <svg className="h-6 w-6" viewBox="0 0 24 24"><path d="M0 1h24v8H0z" fill="#fff" stroke="#777" /><path d="M2 3h4v4H2zM7.500 3h4v4h-4zM13 3h4v4h-4zM18.500 3h4v4h-4z" fill="#333" /><path d="M12 23l-5-5h3.500v-7h3v7H17z" fill="#1a5fd0" /></svg>
      </button>
    </div>
  </div>
);

const MenuBar = () => (
  <header className="flex h-[30px] shrink-0 flex-col">
    <div className="flex h-7 items-center justify-between bg-[linear-gradient(90deg,#235f80_0%,#244a68_13%,#1f2a40_26%,#0f1735_36%,#121b3c_52%,#4b5066_62%,#6e7280_71%,#8d9097_77%,#a8aaab_83%,#b4b6b3_90%)] pr-6 pl-5 font-['Inter',sans-serif]">
      <div className="flex items-center gap-[26px] text-[#6d93ab]">
        <FaApple size={22} className="opacity-80" />
        <span className="pb-[3px] text-[19px] leading-6 font-bold">ProRealTime v11.1</span>
      </div>
      <div className="flex items-center text-[#f4f4f4]">
        <svg className="h-6 w-5 opacity-70" viewBox="0 0 20 24"><path d="M5 7v16M15 1v19" stroke="#ddd" strokeWidth="2" /><path d="M1 10h8v10H1z" fill="#f0c0c0" /><path d="M11 5h8v13h-8z" fill="#b0ecc0" /></svg>
        <svg className="ml-8 h-6 w-6" viewBox="0 0 24 24"><circle cx="12" cy="12" r="11.500" fill="#f4f4f4" /><path d="M7 7h2M14 5h2M17 10h2M11 11h2M6 13h2M14 15h2M10 18h2M18 16h1M11 3h1" stroke="#999" strokeWidth="2.500" strokeLinecap="round" /></svg>
        <svg className="ml-8 h-[22px] w-4" viewBox="0 0 16 22"><path d="M3 8V6a5 5 0 0 1 10 0v2" fill="none" stroke="#f4f4f4" strokeWidth="4" /><path d="M0 8h16v5l-8 5-8-5zM0 16l8 5 8-5v6H0z" fill="#f4f4f4" /></svg>
        <svg className="ml-[30px] h-[21px] w-[30px]" viewBox="0 0 30 21" fill="#f4f4f4"><path d="M5 0h9v5H4zM16 0h9l1 5H16zM3 6.500h11v5H1zM16 6.500h11l2 5H16zM0 13h30v8H0z" /></svg>
        <Bluetooth className="ml-5" size={22} strokeWidth={1.6} />
        <Wifi className="ml-6" size={24} strokeWidth={2.6} />
        <Search className="ml-6" size={19} />
        <svg className="ml-[26px] h-5 w-5" viewBox="0 0 20 20"><rect x="1" y="1" width="18" height="7" rx="3.500" fill="none" stroke="#f4f4f4" strokeWidth="1.600" /><circle cx="5" cy="4.500" r="2.500" fill="#f4f4f4" /><rect x="0" y="11" width="20" height="9" rx="4.500" fill="#f4f4f4" /><circle cx="15" cy="15.500" r="2.500" fill="#aaa" /></svg>
        <time className="ml-6 w-[172px] pb-[3px] text-lg leading-6 whitespace-pre">Sam. 5 févr. à  17:22</time>
      </div>
    </div>
    <div className="h-[2px] bg-[linear-gradient(90deg,#cfeef0_0%,#30c8f0_4%,#1040d0_9%,#000_15%,#8a8478_16%,#15161c_28%,#0a0c2c_60%,#000_67%,#1060f0_68%,#e0f8ff_69%,#d8d8d6_72%,#d8d8d6_100%)]" />
  </header>
);

// Strip of desktop picture between the two groups of windows.
const Desktop = () => (
  <div className="relative min-w-0 bg-[#0a0c30]">
    <svg className="absolute inset-0 h-full w-full" viewBox="2067 30 28 2273" preserveAspectRatio="none">
      <path d="M2067 585L2095 525V2303H2067z" fill="#000" />
      <path d="M2067 606L2095 580V2303H2067z" fill="#1238d8" />
      <path d="M2067 622L2095 594V2303H2067z" fill="#2ab8f8" />
      <path d="M2067 632L2095 608V2303H2067z" fill="#e8fcff" />
      <path d="M2067 645L2095 622V2303H2067z" fill="#dededc" />
      <path d="M2067 1050L2095 1079V2303H2067z" fill="#020202" />
      <path d="M2067 1125L2095 1220V2303H2067z" fill="#1a1a1a" />
    </svg>
  </div>
);

const PIV = [["price", "Prix"], ["pivot", "Points pivots (J)"], ["pivot", "Points pivots (S)"], ["pivot", "Points pivots (M)"]];
const DOW = { symbol: "DOW", change: "(−0,66 %)", market: "Wall Street Cash (1€)" };
const NAS = { symbol: "NASDAQ", change: "(−0,79 %)", market: "US Tech 100 Cash (1€)" };

export default function App() {
  return (
    <div className="flex h-screen w-full flex-col overflow-hidden bg-[#0a0c30] font-['Open_Sans','Noto_Sans',sans-serif] text-base">
      <svg className="absolute h-0 w-0">
        <linearGradient id="rise"><stop offset="0" stopColor="#dcff50" /><stop offset="1" stopColor="#bdf020" /></linearGradient>
        <linearGradient id="fall"><stop offset="0" stopColor="#ffb488" /><stop offset="1" stopColor="#f48d58" /></linearGradient>
      </svg>
      <MenuBar />
      <main className="grid min-h-0 flex-1 grid-cols-[2067fr_28fr_2001fr]">
        <div className="grid min-h-0 min-w-0 grid-rows-[1100fr_1173fr]">
          <Panel
            d={dowTicks}
            title={{ ...DOW, period: "200 ticks", chain: "check", zoomed: true }}
            order={{ sell: { head: "35", main: "054,", tail: "5" }, buy: { head: "35", main: "064,", tail: "3" }, limit: "20", stop: "800" }}
            tabs={[...PIV, ["pivot", "Points pivots (4h)"], ["low", "Plus Bas (J, Pré)"], ["high", "Plus Haut (J, Pré)"], ["close", "Clôture (J, Pré)"]]}
          />
          <div className="grid min-h-0 min-w-0 grid-cols-[1208fr_859fr]">
            <Panel d={dow5} title={{ ...DOW, period: "5 minutes", chain: "broken" }} rsiTab={false} />
            <div className="grid min-h-0 min-w-0 grid-rows-[552fr_621fr]">
              <Panel d={dow15} title={{ ...DOW, period: "15 minutes", chain: "linked" }} tabs={[...PIV, ["pivot", "Points pivots (4h)"]]} />
              <Panel d={dow60} title={{ ...DOW, period: "1 heure", chain: "linked" }} tabs={[...PIV, ["none", "Points pivots (4h)"]]} />
            </div>
          </div>
        </div>
        <Desktop />
        <div className="grid min-h-0 min-w-0 grid-rows-[1100fr_1173fr] border-l border-[#456068]">
          <Panel
            d={nasTicks}
            title={{ ...NAS, period: "200 ticks", chain: "broken", zoomed: false }}
            order={{ sell: { head: "14", main: "654,", tail: "4" }, buy: { head: "14", main: "659,", tail: "4" }, limit: "10", stop: "600" }}
            rsiTab={false}
            footer={<Toolbar />}
          />
          <div className="grid min-h-0 min-w-0 grid-cols-[885fr_1115fr]">
            <div className="grid min-h-0 min-w-0 grid-rows-[550fr_623fr]">
              <Panel d={nas15} title={{ ...NAS, period: "15 minutes", chain: "broken" }} tabs={[...PIV, ["pivot", "Points pivots (4h)"]]} />
              <Panel d={nas60} title={{ ...NAS, period: "1 heure", chain: "broken" }} tabs={[...PIV, ["pivot", "Points pivots (4h)"]]} />
            </div>
            <Panel d={nas5} title={{ ...NAS, period: "5 minutes", chain: "broken" }} tabs={[...PIV, ["none", "Points pivots (4h)"], ["close", "Clôture (J, Pré)"], ["high", "Plus Haut (J, Pré)"], ["low", "Plus Bas (J, Pré)"]]} />
          </div>
        </div>
      </main>
    </div>
  );
}
